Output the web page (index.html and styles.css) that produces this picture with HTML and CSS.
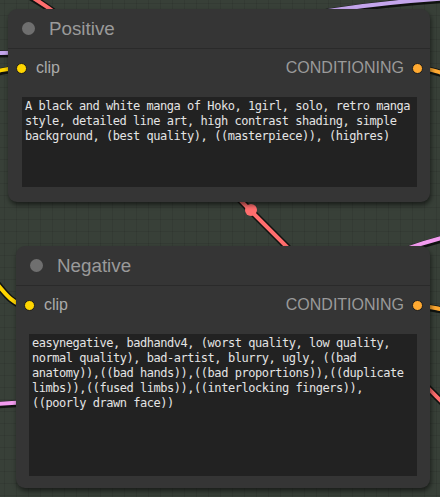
FILE: index.html
```html
<!DOCTYPE html>
<html lang="en">
<head>
<meta charset="utf-8">
<title>Prompt nodes</title>
<link rel="stylesheet" href="styles.css">
</head>
<body>
<main class="canvas">
  <svg class="links" width="440" height="497" viewBox="0 0 440 497" aria-hidden="true">
    <g class="link-shadow">
      <path d="M 0 -18 C 80 10, 150 110, 250 210 L 452 412"/>
      <path d="M -10 53 C 200 53, 250 10, 450 -2"/>
      <path d="M -10 404 C 200 400, 300 270, 450 236"/>
      <path d="M -10 72 C 5 70, 10 68, 21 68"/>
      <path d="M -6 280 C 5 294, 14 306, 29 306"/>
      <path d="M 418 68 C 428 68, 434 71, 446 74"/>
      <path d="M 418 306 C 428 306, 434 308, 446 310"/>
    </g>
    <path class="link red" d="M 0 -18 C 80 10, 150 110, 250 210 L 452 412"/>
    <path class="link purple" d="M -10 53 C 200 53, 250 10, 450 -2"/>
    <path class="link pink" d="M -10 404 C 200 400, 300 270, 450 236"/>
    <path class="link yellow" d="M -10 72 C 5 70, 10 68, 21 68"/>
    <path class="link yellow" d="M -6 280 C 5 294, 14 306, 29 306"/>
    <path class="link orange" d="M 418 68 C 428 68, 434 71, 446 74"/>
    <path class="link orange" d="M 418 306 C 428 306, 434 308, 446 310"/>
    <circle class="link-mid" cx="251" cy="210" r="6"/>
  </svg>

  <section class="node node-positive">
    <header class="node-title"><span class="title-dot"></span><span class="title-text">Positive</span></header>
    <div class="slots">
      <div class="slot slot-in"><span class="dot dot-clip"></span><span>clip</span></div>
      <div class="slot slot-out"><span>CONDITIONING</span><span class="dot dot-cond"></span></div>
    </div>
    <textarea class="prompt prompt-positive" wrap="off" spellcheck="false">A black and white manga of Hoko, 1girl, solo, retro manga
style, detailed line art, high contrast shading, simple
background, (best quality), ((masterpiece)), (highres)</textarea>
  </section>

  <section class="node node-negative">
    <header class="node-title"><span class="title-dot"></span><span class="title-text">Negative</span></header>
    <div class="slots">
      <div class="slot slot-in"><span class="dot dot-clip"></span><span>clip</span></div>
      <div class="slot slot-out"><span>CONDITIONING</span><span class="dot dot-cond"></span></div>
    </div>
    <textarea class="prompt prompt-negative" wrap="off" spellcheck="false">easynegative, badhandv4, (worst quality, low quality,
normal quality), bad-artist, blurry, ugly, ((bad
anatomy)),((bad hands)),((bad proportions)),((duplicate
limbs)),((fused limbs)),((interlocking fingers)),
((poorly drawn face))</textarea>
  </section>
</main>
</body>
</html>
```

FILE: styles.css
```css
* { box-sizing: border-box; }

html, body {
  margin: 0;
  padding: 0;
  width: 440px;
  height: 497px;
  overflow: hidden;
}

.canvas {
  position: relative;
  width: 440px;
  height: 497px;
  overflow: hidden;
  background-color: #384038;
  background-image:
    linear-gradient(to right, rgba(0, 0, 0, 0.08) 1px, transparent 1px),
    linear-gradient(to bottom, rgba(0, 0, 0, 0.08) 1px, transparent 1px);
  background-size: 12px 12px;
  background-position: 4px 3px;
  font-family: "Liberation Sans", Arial, sans-serif;
}

.links {
  position: absolute;
  left: 0;
  top: 0;
}

.link-shadow path {
  fill: none;
  stroke: rgba(0, 0, 0, 0.7);
  stroke-width: 7;
  transform: translate(1px, 1px);
}

.link {
  fill: none;
  stroke-width: 4;
}

.red { stroke: #ff6e6e; }
.purple { stroke: #c4a6ec; }
.pink { stroke: #f39cf0; }
.yellow { stroke: #ffd500; }
.orange { stroke: #ffa931; }

.link-mid {
  fill: #ff6e6e;
}

.node {
  position: absolute;
  display: flex;
  flex-direction: column;
  background: #353535;
  border-radius: 9px;
  box-shadow: 1px 3px 5px rgba(0, 0, 0, 0.55);
}

.node-positive {
  left: 8px;
  top: 9px;
  width: 422px;
  height: 193px;
}

.node-negative {
  left: 16px;
  top: 246px;
  width: 414px;
  height: 242px;
}

.node-title {
  height: 40px;
  display: flex;
  align-items: center;
  gap: 14px;
  padding-left: 14px;
  border-bottom: 1px solid #2a2a2a;
}

.title-dot {
  width: 13px;
  height: 13px;
  border-radius: 50%;
  background: #6f6f6f;
}

.title-text {
  font-size: 18.8px;
  color: #9a9a9a;
  padding-top: 1px;
}

.slots {
  margin-top: 6px;
  height: 26px;
  display: flex;
  align-items: center;
  justify-content: space-between;
  padding: 0 7px 0 8px;
  font-size: 16px;
}

.slot {
  display: flex;
  align-items: center;
}

.slot-in {
  gap: 9px;
  color: #aaaaaa;
}

.slot-out {
  gap: 8px;
  color: #9a9a9a;
}

.dot {
  width: 11px;
  height: 11px;
  border-radius: 50%;
  border: 1px solid #1c1c1c;
}

.dot-clip { background: #ffd500; }
.dot-cond { background: #ffa931; }

.prompt {
  display: block;
  margin: 16px 13px 0 14px;
  padding: 2px 3px;
  border: none;
  border-radius: 0;
  outline: none;
  resize: none;
  overflow: hidden;
  background: #222222;
  color: #e4e4e4;
  font-family: "DejaVu Sans Mono", "Liberation Mono", monospace;
  font-size: 12px;
  letter-spacing: -0.47px;
  line-height: 15px;
}

.prompt-positive {
  height: 90px;
}

.prompt-negative {
  margin-left: 13px;
  height: 142px;
}
```
